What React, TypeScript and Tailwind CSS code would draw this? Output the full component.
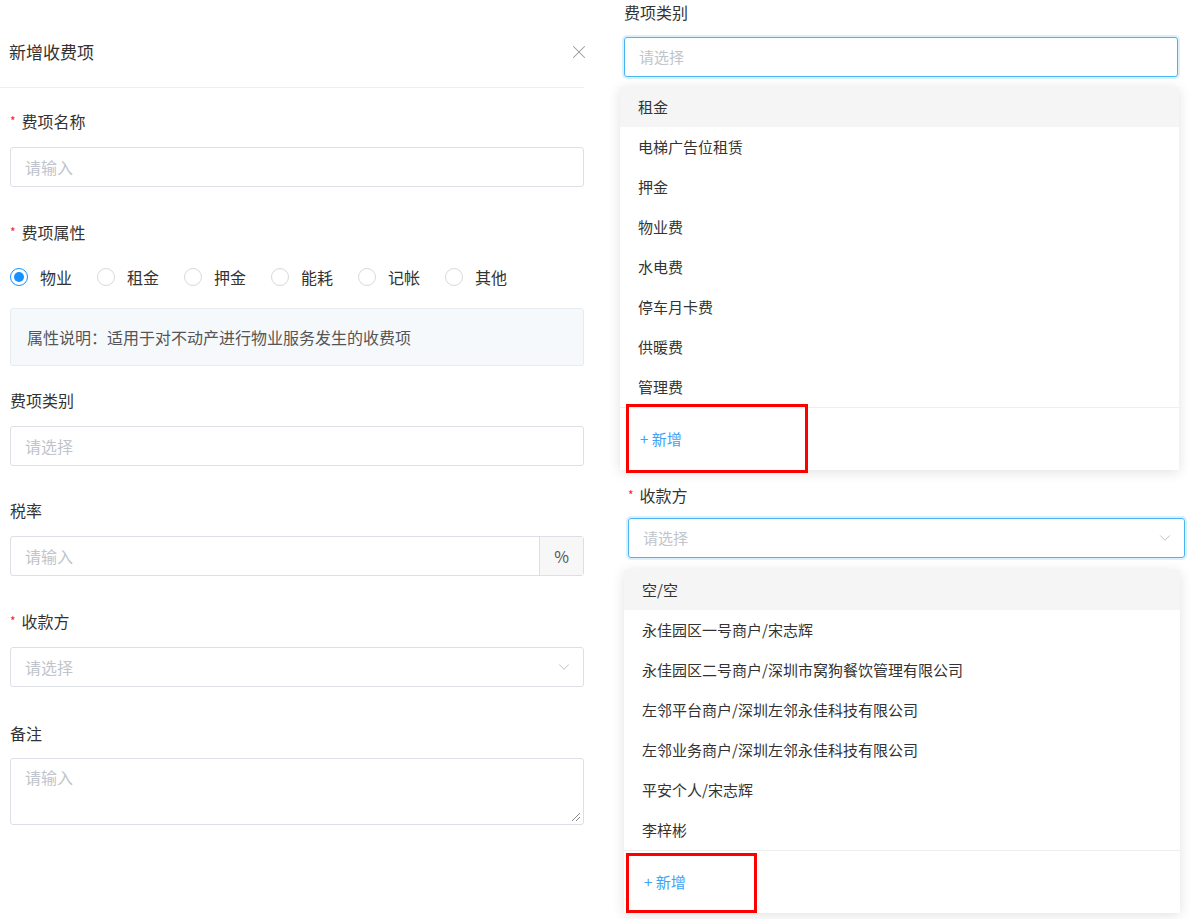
import { X, ChevronDown } from 'lucide-react';

const font = { fontFamily: '"Noto Sans CJK SC", "Noto Sans", sans-serif' };

// Form label with optional red star
function Label({ text, required, className = '' }: { text: string; required?: boolean; className?: string }) {
	return (
		<div className={`flex h-6 items-center text-[16px] leading-6 text-[#333] ${className}`}>
			{required && <span className="mr-[6px] text-[12px] text-[#f5222d]">*</span>}
			{text}
		</div>
	);
}

function Radio({ label, checked }: { label: string; checked?: boolean }) {
	return (
		<div className="flex w-[87px] items-center">
			<span
				className={`flex h-[18px] w-[18px] items-center justify-center rounded-full border ${
					checked ? 'border-[#1890ff]' : 'border-[#d9d9d9]'
				}`}
			>
				{checked && <span className="h-[10px] w-[10px] rounded-full bg-[#1890ff]" />}
			</span>
			<span className="ml-[12px] text-[16px] text-[#333]">{label}</span>
		</div>
	);
}

function ResizeHandle() {
	return (
		<svg width="10" height="10" viewBox="0 0 10 10" className="absolute bottom-[2px] right-[2px]">
			<line x1="9" y1="1" x2="1" y2="9" stroke="#888" strokeWidth="1" />
			<line x1="9" y1="5" x2="5" y2="9" stroke="#888" strokeWidth="1" />
		</svg>
	);
}

// Left panel: 新增收费项 form
function FeeForm() {
	return (
		<div className="w-[596px] shrink-0 pr-[12px]">
			<div className="flex h-[88px] items-center justify-between border-b border-[#eeeeee] pl-[9px] pt-[16px]">
				<div className="text-[17px] leading-6 text-[#333]">新增收费项</div>
				<X size={22} strokeWidth={1.1} className="mr-[-6px] text-[#999]" />
			</div>
			<div className="pl-[10px]">
				<Label text="费项名称" required className="mt-[21px]" />
				<div className="mt-[14px] flex h-[40px] items-center rounded-[3px] border border-[#dcdfe6] px-[14px] text-[16px] text-[#c0c4cc]">
					请输入
				</div>

				<Label text="费项属性" required className="mt-[33px]" />
				<div className="mt-[21px] flex h-6 items-center">
					<Radio label="物业" checked />
					<Radio label="租金" />
					<Radio label="押金" />
					<Radio label="能耗" />
					<Radio label="记帐" />
					<Radio label="其他" />
				</div>
				<div className="mt-[19px] flex h-[58px] items-center rounded-[3px] border border-[#e6ebf0] bg-[#f6f9fc] px-[16px] text-[16px] text-[#555]">
					属性说明：适用于对不动产进行物业服务发生的收费项
				</div>

				<Label text="费项类别" className="mt-[22px]" />
				<div className="mt-[14px] flex h-[40px] items-center rounded-[3px] border border-[#dcdfe6] px-[14px] text-[16px] text-[#c0c4cc]">
					请选择
				</div>

				<Label text="税率" className="mt-[32px]" />
				<div className="mt-[14px] flex h-[40px] rounded-[3px] border border-[#dcdfe6] text-[16px]">
					<div className="flex flex-1 items-center px-[14px] text-[#c0c4cc]">请输入</div>
					<div className="flex w-[44px] items-center justify-center border-l border-[#dcdfe6] bg-[#f7f7f7] text-[#555]">%</div>
				</div>

				<Label text="收款方" required className="mt-[33px]" />
				<div className="mt-[14px] flex h-[40px] items-center justify-between rounded-[3px] border border-[#dcdfe6] pl-[14px] pr-[10px] text-[16px] text-[#c0c4cc]">
					请选择
					<ChevronDown size={18} strokeWidth={1} className="text-[#aaa]" />
				</div>

				<Label text="备注" className="mt-[34px]" />
				<div className="relative mt-[13px] h-[67px] rounded-[3px] border border-[#dcdfe6] px-[14px] pt-[6px] text-[16px] text-[#c0c4cc]">
					请输入
					<ResizeHandle />
				</div>
			</div>
		</div>
	);
}

function Option({ text, active }: { text: string; active?: boolean }) {
	return (
		<div className={`flex h-[40px] items-center px-[18px] text-[15px] text-[#333] ${active ? 'bg-[#f5f5f5]' : ''}`}>
			{text}
		</div>
	);
}

function AddFooter({ boxClass }: { boxClass: string }) {
	return (
		<div className="relative flex h-[63px] items-center border-t border-[#eeeeee] px-[20px] text-[15px] text-[#3ea2f7]">
			+ 新增
			<div className={`absolute border-[3px] border-[#ff0000] ${boxClass}`} />
		</div>
	);
}

const feeTypes = ['租金', '电梯广告位租赁', '押金', '物业费', '水电费', '停车月卡费', '供暖费', '管理费'];
const payees = [
	'空/空',
	'永佳园区一号商户/宋志辉',
	'永佳园区二号商户/深圳市窝狗餐饮管理有限公司',
	'左邻平台商户/深圳左邻永佳科技有限公司',
	'左邻业务商户/深圳左邻永佳科技有限公司',
	'平安个人/宋志辉',
	'李梓彬',
];

export default function App() {
	return (
		<div className="flex h-[919px] w-[1200px] overflow-hidden bg-white" style={font}>
			<FeeForm />
			<div className="flex flex-1 flex-col pl-[10px]">
				{/* 费项类别 dropdown open */}
				<div className="h-[475px] pl-[18px] pr-[22px]">
					<Label text="费项类别" className="text-[15px]" />
					<div className="mt-[13px] flex h-[40px] items-center rounded-[3px] border border-[#48b4f2] px-[14px] text-[15px] text-[#c0c4cc] shadow-[0_0_0_2px_rgba(72,180,242,0.2)]">
						请选择
					</div>
					<div className="ml-[-4px] mr-[-1px] mt-[10px] bg-white shadow-[0_2px_12px_rgba(0,0,0,0.12)]">
						{feeTypes.map((t, i) => (
							<Option key={t} text={t} active={i === 0} />
						))}
						<AddFooter boxClass="left-[6px] top-[-4px] h-[69px] w-[182px]" />
					</div>
				</div>
				{/* 收款方 dropdown open */}
				<div className="flex-1 pl-[22px] pr-[15px]">
					<Label text="收款方" required className="mt-[8px] text-[15px]" />
					<div className="mt-[11px] flex h-[40px] items-center justify-between rounded-[3px] border border-[#48b4f2] pl-[14px] pr-[10px] text-[15px] text-[#c0c4cc] shadow-[0_0_0_2px_rgba(72,180,242,0.2)]">
						请选择
						<ChevronDown size={18} strokeWidth={1} className="text-[#aaa]" />
					</div>
					<div className="ml-[-4px] mr-[5px] mt-[12px] bg-white shadow-[0_2px_12px_rgba(0,0,0,0.12)]">
						{payees.map((t, i) => (
							<Option key={t} text={t} active={i === 0} />
						))}
						<AddFooter boxClass="left-[2px] top-[2px] h-[60px] w-[131px]" />
					</div>
				</div>
			</div>
		</div>
	);
}
